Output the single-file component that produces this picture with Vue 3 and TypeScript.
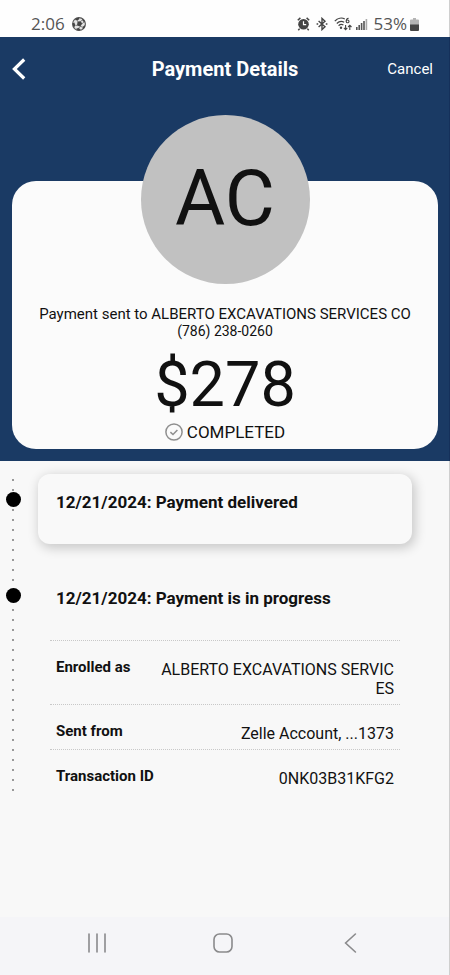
<script setup lang="ts">
interface Detail {
  label: string
  value: string
}

interface Step {
  title: string
  raised: boolean
  details: Detail[]
}

const signalBars = [3, 5, 7, 9, 11]

const steps: Step[] = [
  { title: '12/21/2024: Payment delivered', raised: true, details: [] },
  {
    title: '12/21/2024: Payment is in progress',
    raised: false,
    details: [
      { label: 'Enrolled as', value: 'ALBERTO EXCAVATIONS SERVICES' },
      { label: 'Sent from', value: 'Zelle Account, ...1373' },
      { label: 'Transaction ID', value: '0NK03B31KFG2' },
    ],
  },
]
</script>

<template>
  <div class="page">
    <div class="status">
      <span>2:06</span>
      <svg class="ball" width="14" height="14" viewBox="0 0 14 14" aria-hidden="true">
        <circle cx="7" cy="7" r="6.4" fill="#e2e2e2" stroke="#555" stroke-width="1.1" />
        <path d="M5.6 4.6 8.8 4.2 10.2 6.8 8.2 9.4 5 8.4Z" fill="#444" />
        <path d="M3.6 1.4 6.8.5 7.4 2 5.4 3.4 3.2 3ZM.6 6.2 2.4 5.6 3.2 8.2 2.2 10.4.9 9ZM4.4 11.4 6.8 11 8.6 12.6 7.4 13.6 4.8 13.2ZM10.6 10 12.4 8.4 13.4 8.2 12.4 11 10.6 12.4ZM10.2 1.6 12.2 3.2 13.2 5.4 11.8 5 10.2 3.2Z" fill="#444" />
        <path d="M5.4 3.4 5.6 4.6M3.2 8.2 5 8.4M6.8 11 8.2 9.4 10.6 10M10.2 6.8 11.8 5M8.8 4.2 10.2 3.2" stroke="#555" stroke-width=".7" fill="none" />
      </svg>
      <div class="indicators">
        <svg width="13" height="14" viewBox="0 0 13 14" aria-hidden="true">
          <path d="M.8 3.3 3.4.9M12.2 3.3 9.6.9M2.6 11.6 1.3 13.2M10.4 11.6 11.7 13.2" stroke="#444" stroke-width="1.5" fill="none" />
          <circle cx="6.5" cy="7.2" r="5.3" fill="#444" />
          <path d="M6.5 4.3V7.6H9.2" stroke="#fff" stroke-width="1.2" fill="none" />
        </svg>
        <svg width="12" height="14" viewBox="0 0 12 14" fill="none" stroke="#444" aria-hidden="true">
          <path d="M2.6 4 9 9.8 6 12.6V1.4L9 4.2 2.6 10" stroke-width="1.4" />
          <path d="M.6 7H2.2M9.8 7H11.4" stroke-width="1.6" />
        </svg>
        <svg width="18" height="14" viewBox="0 0 18 14" fill="none" stroke="#444" aria-hidden="true">
          <path d="M.8 4.2C3.7.9 8 .6 10.8 2M2.8 6.5C5 4.3 8 4.1 10.2 5.2M4.6 8.7C6 7.4 7.8 7.2 9.4 8" stroke-width="1.2" />
          <circle cx="7" cy="10.8" r="1.2" fill="#444" stroke="none" />
          <path d="M14.6 1.2C13 1.4 12.2 2.8 12.2 4.2" stroke-width="1.1" />
          <circle cx="13.6" cy="4.4" r="1.4" stroke-width="1.1" />
          <path d="M11.6 8V12.6M9.9 10.9 11.6 12.7 13.3 10.9M15.8 13V8.2M14.1 10 15.8 8.2 17.5 10" stroke-width="1.1" />
        </svg>
        <svg class="signal" width="12" height="12" viewBox="0 0 12 12" aria-hidden="true">
          <rect
            v-for="(height, index) in signalBars"
            :key="height"
            :x="index * 2.4"
            :y="12 - height"
            width="1.6"
            :height="height"
            :fill="index < 4 ? '#555' : '#aaa'"
          />
        </svg>
        <span>53%</span>
        <svg class="battery" width="9" height="13" viewBox="0 0 9 13" aria-hidden="true">
          <path d="M3 0H6V1.5H8Q9 1.5 9 2.5V7H0V2.5Q0 1.5 1 1.5H3Z" fill="#b4b4b4" />
          <path d="M0 6.5H9V12Q9 13 8 13H1Q0 13 0 12Z" fill="#454545" />
        </svg>
      </div>
    </div>

    <header class="hero">
      <div class="bar">
        <button class="back" type="button" aria-label="Back">
          <svg width="14" height="22" viewBox="0 0 14 22" fill="none" stroke="#fff" stroke-width="3.2" aria-hidden="true">
            <path d="M12.2 1.5 2.4 11 12.2 20.5" />
          </svg>
        </button>
        <h1>Payment Details</h1>
        <button class="cancel" type="button">Cancel</button>
      </div>

      <section class="card">
        <div class="avatar">AC</div>
        <p class="recipient">Payment sent to ALBERTO EXCAVATIONS SERVICES CO</p>
        <p class="phone">(786) 238-0260</p>
        <p class="amount">$278</p>
        <p class="state">
          <svg width="18" height="18" viewBox="0 0 18 18" fill="none" stroke="#8f8f8f" aria-hidden="true">
            <circle cx="9" cy="9" r="8.1" stroke-width="1.5" />
            <path d="M5.4 9.1 8 11.5 12.4 7" stroke-width="1.5" />
          </svg>
          COMPLETED
        </p>
      </section>
    </header>

    <main>
      <ol class="timeline">
        <li v-for="step in steps" :key="step.title" class="step">
          <span class="marker"></span>
          <article class="entry" :class="{ raised: step.raised }">
            <h2>{{ step.title }}</h2>
            <dl v-if="step.details.length">
              <div v-for="detail in step.details" :key="detail.label" class="row">
                <dt>{{ detail.label }}</dt>
                <dd>{{ detail.value }}</dd>
              </div>
            </dl>
          </article>
        </li>
      </ol>
    </main>

    <nav class="system">
      <button type="button" aria-label="Recent apps">
        <svg width="20" height="20" viewBox="0 0 20 20" stroke="#8a8a8c" stroke-width="1.6" stroke-linecap="round" aria-hidden="true">
          <path d="M2 1V19M10 1V19M18 1V19" />
        </svg>
      </button>
      <button type="button" aria-label="Home">
        <svg width="20" height="20" viewBox="0 0 20 20" fill="none" stroke="#8a8a8c" stroke-width="1.6" aria-hidden="true">
          <rect x="1" y="1" width="18" height="18" rx="5.5" />
        </svg>
      </button>
      <button type="button" aria-label="Go back">
        <svg width="20" height="20" viewBox="0 0 20 20" fill="none" stroke="#8a8a8c" stroke-width="1.6" stroke-linecap="round" aria-hidden="true">
          <path d="M15.4 1 5.6 10 15.4 19" />
        </svg>
      </button>
    </nav>
  </div>
</template>

<style>
body {
  margin: 0;
  background: #f8f8f8;
}
</style>

<style scoped>
.page {
  display: flex;
  flex-direction: column;
  min-height: 100vh;
  box-sizing: border-box;
  color: #111;
  background: #f8f8f8;
  font-family: Roboto, "Liberation Sans", sans-serif;
}

h1,
h2,
p,
dl,
dd,
ol {
  margin: 0;
  padding: 0;
}

button {
  padding: 0;
  border: 0;
  background: none;
  color: inherit;
  font: inherit;
  cursor: pointer;
}

svg {
  display: block;
  flex: none;
}

.status,
main,
.system {
  box-shadow: inset -1px 0 #cfcfcf;
}

.status {
  display: flex;
  align-items: center;
  gap: 7px;
  height: 37px;
  padding: 11px 31px 0;
  box-sizing: border-box;
  background: #fefefe;
  color: #555;
  font-family: "Open Sans", Roboto, sans-serif;
  font-size: 17px;
  line-height: 26px;
}

.indicators {
  display: flex;
  align-items: center;
  gap: 6px;
  margin-left: auto;
}

.signal {
  margin-left: -2px;
}

.battery {
  margin-left: -3px;
}

.hero {
  padding: 0 12px 12px;
  background: #1a3a64;
  box-shadow: inset -1px 0 #15305a;
}

.bar {
  display: grid;
  grid-template-columns: 1fr auto 1fr;
  align-items: center;
  height: 64px;
  color: #fff;
}

.bar h1 {
  font-size: 20px;
  line-height: 24px;
  font-weight: 700;
}

.back {
  justify-self: start;
}

.cancel {
  justify-self: end;
  margin-right: 5px;
  font-size: 15px;
  line-height: 20px;
}

.card {
  display: flex;
  flex-direction: column;
  align-items: center;
  margin-top: 80px;
  padding-bottom: 7px;
  border-radius: 24px;
  background: #fbfbfb;
  text-align: center;
}

.avatar {
  width: 169px;
  height: 169px;
  margin-top: -66px;
  border-radius: 50%;
  background: #c1c1c1;
  font-size: 77px;
  line-height: 169px;
}

.recipient {
  margin-top: 22px;
  font-size: 15px;
  line-height: 17px;
}

.phone {
  font-size: 14px;
  line-height: 16px;
}

.amount {
  margin-top: 8px;
  font-size: 63px;
  line-height: 75px;
}

.state {
  display: flex;
  align-items: center;
  gap: 4px;
  font-size: 17px;
  line-height: 20px;
}

main {
  flex: 1;
}

.timeline {
  display: flex;
  flex-direction: column;
  gap: 26px;
  margin-top: 13px;
  list-style: none;
  background: repeating-linear-gradient(transparent 0 5px, #999 5px 7px, transparent 7px 10px) 12px 0 / 2px 100% no-repeat;
}

.step {
  display: flex;
  gap: 17px;
  padding: 0 38px 0 6px;
}

.marker {
  flex: none;
  width: 15px;
  height: 15px;
  margin-top: 18px;
  border-radius: 50%;
  background: #000;
}

.entry {
  flex: 1;
  min-width: 0;
  min-height: 70px;
  padding: 18px 12px 0 18px;
  box-sizing: border-box;
  border-radius: 12px;
}

.raised {
  background: #f9f9f9;
  box-shadow: 2px 3px 12px 1px rgba(0, 0, 0, 0.2);
}

h2 {
  font-size: 17px;
  line-height: 20px;
  font-weight: 700;
}

dl {
  margin: 32px 0 0 -6px;
}

.row {
  display: flex;
  justify-content: space-between;
  padding: 19px 6px 6px;
  border-top: 1px dotted #c8c8c8;
}

dt {
  font-size: 15px;
  line-height: 15px;
  font-weight: 700;
  white-space: nowrap;
}

dd {
  flex: 0 1 240px;
  font-size: 16px;
  line-height: 19px;
  text-align: right;
  word-break: break-all;
}

.system {
  display: grid;
  grid-template-columns: repeat(3, 1fr);
  height: 58px;
  padding: 0 37px 6px 34px;
  box-sizing: border-box;
  background: #f5f5f8;
}

.system button {
  display: grid;
  place-items: center;
}
</style>
